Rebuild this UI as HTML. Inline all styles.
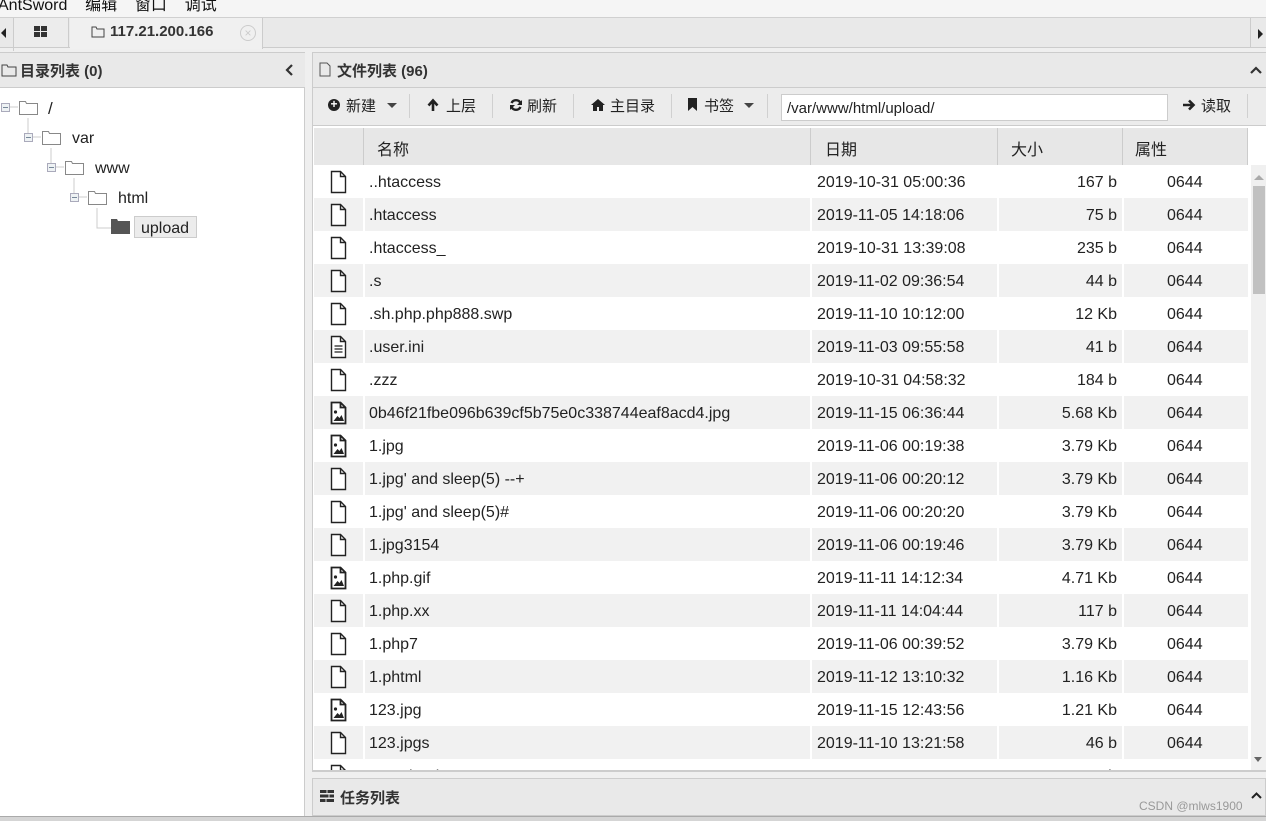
<!DOCTYPE html>
<html><head><meta charset="utf-8"><style>
*{margin:0;padding:0;box-sizing:border-box}
body{width:1266px;height:821px;overflow:hidden;background:#efefef;font-family:"Liberation Sans","Noto Sans CJK SC",sans-serif;font-size:15px;color:#222;position:relative}
.a{position:absolute}
</style></head><body>
<!-- menu -->
<div class="a" style="left:0;top:0;width:1266px;height:17px;background:#f5f5f5"></div>
<div class="a" style="left:-2px;top:-9px;font-size:16px;color:#111">AntSword&nbsp;&nbsp;&nbsp;&nbsp;编辑&nbsp;&nbsp;&nbsp;&nbsp;窗口&nbsp;&nbsp;&nbsp;&nbsp;调试</div>
<!-- tabs -->
<div class="a" style="left:0;top:17px;width:1266px;height:31px;background:#e9e9e9;border-top:1px solid #d0d0d0;border-bottom:1px solid #ccc"></div>
<div class="a" style="left:1px;top:28px;width:0;height:0;border-top:5px solid transparent;border-bottom:5px solid transparent;border-right:5px solid #222"></div>
<div class="a" style="left:13px;top:18px;width:1px;height:33px;background:#ccc"></div>
<div class="a" style="left:14px;top:18px;width:55px;height:29px;background:#ececec;border-right:1px solid #ccc"></div>
<div class="a" style="left:34px;top:26px;width:6px;height:5px;background:#333"></div><div class="a" style="left:41px;top:26px;width:6px;height:5px;background:#333"></div>
<div class="a" style="left:34px;top:32px;width:6px;height:5px;background:#333"></div><div class="a" style="left:41px;top:32px;width:6px;height:5px;background:#333"></div>
<div class="a" style="left:70px;top:18px;width:193px;height:31px;background:#f0f0f0;border-right:1px solid #ccc"></div>
<svg class="a" style="left:91px;top:25px" width="14" height="13"><path d="M1 2h4l1 2h7v8H1z" fill="none" stroke="#444"/></svg>
<div class="a" style="left:110px;top:23px;font-weight:bold;font-size:15px;color:#333">117.21.200.166</div>
<div class="a" style="left:240px;top:25px;width:16px;height:16px;border-radius:50%;border:1px solid #ccc;color:#ccc;font-size:12px;line-height:14px;text-align:center">×</div>
<div class="a" style="left:1250px;top:18px;width:1px;height:30px;background:#ccc"></div>
<div class="a" style="left:1258px;top:29px;width:0;height:0;border-top:5px solid transparent;border-bottom:5px solid transparent;border-left:5px solid #222"></div>
<!-- left panel -->
<div class="a" style="left:0;top:52px;width:305px;height:764px;background:#fff;border-right:1px solid #ccc"></div>
<div class="a" style="left:0;top:52px;width:305px;height:36px;background:#e9e9e9;border-top:1px solid #ccc;border-bottom:1px solid #ccc"></div>
<svg class="a" style="left:1px;top:63px" width="16" height="14"><path d="M1 2h5l1 2h8v9H1z" fill="none" stroke="#444"/></svg>
<div class="a" style="left:20px;top:60px;font-weight:bold;font-size:15px;color:#333">目录列表 (0)</div>
<svg class="a" style="left:285px;top:64px" width="10" height="12"><path d="M7 1L2 6l5 5" fill="none" stroke="#333" stroke-width="2.2"/></svg>
<!-- tree -->
<svg class="a" style="left:0;top:90px" width="210" height="150">
<g stroke="#ccc" fill="none">
<path d="M28 28v20M51 58v20M74 88v20M97 118v20h14"/>
<path d="M10 17h8M33 47h8M56 77h8M79 107h8"/>
</g>
<g fill="#eef2f4" stroke="#aab">
<rect x="1.5" y="13.5" width="8" height="8"/><rect x="24.5" y="43.5" width="8" height="8"/><rect x="47.5" y="73.5" width="8" height="8"/><rect x="70.5" y="103.5" width="8" height="8"/>
</g>
<g stroke="#789"><path d="M3 17.5h5M26 47.5h5M49 77.5h5M72 107.5h5"/></g>
<g fill="#fff" stroke="#888">
<path d="M19.5 11.5h6l1 2h11v11h-18z"/><path d="M42.5 41.5h6l1 2h11v11h-18z"/><path d="M65.5 71.5h6l1 2h11v11h-18z"/><path d="M88.5 101.5h6l1 2h11v11h-18z"/>
</g>
<path d="M111 129h6l1 2h12v13h-19z" fill="#555"/>
</svg>
<div class="a" style="left:48px;top:99px;font-size:17px">/</div>
<div class="a" style="left:72px;top:130px;font-size:16px">var</div>
<div class="a" style="left:95px;top:160px;font-size:16px">www</div>
<div class="a" style="left:118px;top:190px;font-size:16px">html</div>
<div class="a" style="left:134px;top:216px;width:63px;height:22px;background:#ececec;border:1px solid #ccc;font-size:16px;padding:3px 0 0 6px">upload</div>
<!-- right panel -->
<div class="a" style="left:312px;top:52px;width:954px;height:720px;background:#fff;border-left:1px solid #ccc;border-top:1px solid #ccc"></div>
<div class="a" style="left:313px;top:53px;width:953px;height:35px;background:#e9e9e9;border-bottom:1px solid #ccc"></div>
<svg class="a" style="left:319px;top:62px" width="12" height="15"><path d="M1 1h7l3 3v10H1z" fill="none" stroke="#555"/></svg>
<div class="a" style="left:337px;top:60px;font-weight:bold;font-size:15px;color:#333">文件列表 (96)</div>
<svg class="a" style="left:1250px;top:66px" width="12" height="8"><path d="M1 7l5-5 5 5" fill="none" stroke="#333" stroke-width="2.2"/></svg>
<!-- toolbar -->
<div class="a" style="left:313px;top:88px;width:953px;height:38px;background:#ececec;border-bottom:1px solid #ccc"></div>
<div class="a" style="left:328px;top:99px;width:12px;height:12px;border-radius:50%;background:#222;color:#fff;font-size:12px;line-height:11px;text-align:center;font-weight:bold">+</div>
<div class="a" style="left:346px;top:95px;font-size:15px">新建</div>
<div class="a" style="left:387px;top:103px;border-left:5px solid transparent;border-right:5px solid transparent;border-top:5px solid #444"></div>
<div class="a" style="left:409px;top:94px;width:1px;height:24px;background:#d0d0d0"></div>
<svg class="a" style="left:427px;top:98px" width="12" height="14"><path d="M6 13V3M1.5 7.5L6 2.5l4.5 5" fill="none" stroke="#222" stroke-width="2.6"/></svg>
<div class="a" style="left:446px;top:95px;font-size:15px">上层</div>
<div class="a" style="left:492px;top:94px;width:1px;height:24px;background:#d0d0d0"></div>
<svg class="a" style="left:509px;top:98px" width="14" height="14"><path d="M11.5 5A5 5 0 0 0 2.5 5M2.5 9A5 5 0 0 0 11.5 9" fill="none" stroke="#222" stroke-width="2.4"/><path d="M13 2v5H8zM1 12V7h5z" fill="#222"/></svg>
<div class="a" style="left:527px;top:95px;font-size:15px">刷新</div>
<div class="a" style="left:573px;top:94px;width:1px;height:24px;background:#d0d0d0"></div>
<svg class="a" style="left:591px;top:99px" width="14" height="12"><path d="M7 0L0 6h2v6h4v-4h2v4h4V6h2z" fill="#222"/></svg>
<div class="a" style="left:610px;top:95px;font-size:15px">主目录</div>
<div class="a" style="left:671px;top:94px;width:1px;height:24px;background:#d0d0d0"></div>
<svg class="a" style="left:688px;top:98px" width="10" height="14"><path d="M0 0h9v13L4.5 9 0 13z" fill="#222"/></svg>
<div class="a" style="left:704px;top:95px;font-size:15px">书签</div>
<div class="a" style="left:744px;top:103px;border-left:5px solid transparent;border-right:5px solid transparent;border-top:5px solid #444"></div>
<div class="a" style="left:767px;top:94px;width:1px;height:24px;background:#d0d0d0"></div>
<div class="a" style="left:781px;top:94px;width:387px;height:27px;background:#fff;border:1px solid #ccc;font-size:15px;padding:5px 0 0 5px">/var/www/html/upload/</div>
<svg class="a" style="left:1182px;top:99px" width="14" height="12"><path d="M1 6h10M7 1.5L11.5 6 7 10.5" fill="none" stroke="#222" stroke-width="2.6"/></svg>
<div class="a" style="left:1201px;top:95px;font-size:15px">读取</div>
<div class="a" style="left:1247px;top:94px;width:1px;height:24px;background:#d0d0d0"></div>
<!-- table header -->
<div class="a" style="left:314px;top:128px;width:934px;height:37px;background:#e7e7e7"></div>
<div class="a" style="left:363px;top:128px;width:1px;height:37px;background:#ccc"></div>
<div class="a" style="left:810px;top:128px;width:1px;height:37px;background:#ccc"></div>
<div class="a" style="left:997px;top:128px;width:1px;height:37px;background:#ccc"></div>
<div class="a" style="left:1122px;top:128px;width:1px;height:37px;background:#ccc"></div>
<div class="a" style="left:1247px;top:128px;width:1px;height:37px;background:#ccc"></div>
<div class="a" style="left:377px;top:136px;font-size:16px">名称</div>
<div class="a" style="left:825px;top:136px;font-size:16px">日期</div>
<div class="a" style="left:1011px;top:136px;font-size:16px">大小</div>
<div class="a" style="left:1135px;top:136px;font-size:16px">属性</div>
<!-- rows -->
<div class="a" style="left:314px;top:165px;width:934px;height:605px;overflow:hidden">
<div id="rows"></div>
</div>
<svg width="0" height="0" style="position:absolute"><defs>
<symbol id="f" viewBox="0 0 22 24"><path d="M4.5 1.5h9l5 5v16h-14z M13.5 1.5v5h5" fill="#fff" stroke="#222" stroke-width="1.4"/></symbol>
<symbol id="i" viewBox="0 0 22 24"><path d="M4.5 1.5h9l5 5v16h-14z M13.5 1.5v5h5" fill="#fff" stroke="#222" stroke-width="1.8"/><circle cx="8.5" cy="11" r="1.6" fill="#222"/><path d="M6.5 20l4-5 2 2 2-3 2.5 6z" fill="#222"/></symbol>
<symbol id="t" viewBox="0 0 22 24"><path d="M4.5 1.5h9l5 5v16h-14z M13.5 1.5v5h5" fill="#fff" stroke="#222" stroke-width="1.4"/><path d="M7.5 11h8M7.5 14h8M7.5 17h8" stroke="#222" stroke-width="1.2"/></symbol>
</defs></svg>
<script>
var d=[["f","..htaccess","2019-10-31 05:00:36","167 b"],["f",".htaccess","2019-11-05 14:18:06","75 b"],["f",".htaccess_","2019-10-31 13:39:08","235 b"],["f",".s","2019-11-02 09:36:54","44 b"],["f",".sh.php.php888.swp","2019-11-10 10:12:00","12 Kb"],["t",".user.ini","2019-11-03 09:55:58","41 b"],["f",".zzz","2019-10-31 04:58:32","184 b"],["i","0b46f21fbe096b639cf5b75e0c338744eaf8acd4.jpg","2019-11-15 06:36:44","5.68 Kb"],["i","1.jpg","2019-11-06 00:19:38","3.79 Kb"],["f","1.jpg' and sleep(5) --+","2019-11-06 00:20:12","3.79 Kb"],["f","1.jpg' and sleep(5)#","2019-11-06 00:20:20","3.79 Kb"],["f","1.jpg3154","2019-11-06 00:19:46","3.79 Kb"],["i","1.php.gif","2019-11-11 14:12:34","4.71 Kb"],["f","1.php.xx","2019-11-11 14:04:44","117 b"],["f","1.php7","2019-11-06 00:39:52","3.79 Kb"],["f","1.phtml","2019-11-12 13:10:32","1.16 Kb"],["i","123.jpg","2019-11-15 12:43:56","1.21 Kb"],["f","123.jpgs","2019-11-10 13:21:58","46 b"],["f","123.phtml","2019-11-11 05:00:34","53 b"]];
var h="";d.forEach(function(r,k){var g=k%2?"background:#f1f1f1;":"";
h+='<div style="position:absolute;left:0;top:'+(k*33)+'px;width:934px;height:33px;'+g+'">'+
(k%2?'<div style="position:absolute;left:49px;top:0;width:2px;height:33px;background:#fff"></div><div style="position:absolute;left:496px;top:0;width:2px;height:33px;background:#fff"></div><div style="position:absolute;left:683px;top:0;width:2px;height:33px;background:#fff"></div><div style="position:absolute;left:808px;top:0;width:2px;height:33px;background:#fff"></div>':'')+
'<svg style="position:absolute;left:13px;top:5px" width="22" height="24"><use href="#'+r[0]+'"/></svg>'+
'<span style="position:absolute;left:55px;top:9px;font-size:16px;white-space:nowrap">'+r[1]+'</span>'+
'<span style="position:absolute;left:503px;top:9px;font-size:16px">'+r[2]+'</span>'+
'<span style="position:absolute;right:131px;top:9px;font-size:16px">'+r[3]+'</span>'+
'<span style="position:absolute;left:853px;top:9px;font-size:16px">0644</span></div>';});
document.getElementById("rows").innerHTML=h;
</script>
<!-- scrollbar -->
<div class="a" style="left:1251px;top:165px;width:15px;height:605px;background:#f0f0f0"></div>
<div class="a" style="left:1254px;top:175px;border-left:5px solid transparent;border-right:5px solid transparent;border-bottom:5px solid #aaa"></div>
<div class="a" style="left:1253px;top:186px;width:12px;height:108px;background:#c1c1c1"></div>
<div class="a" style="left:1254px;top:757px;border-left:4px solid transparent;border-right:4px solid transparent;border-top:5px solid #666"></div>
<div class="a" style="left:312px;top:770px;width:954px;height:2px;background:#ccc"></div>
<!-- task panel -->
<div class="a" style="left:312px;top:778px;width:954px;height:38px;background:#e9e9e9;border:1px solid #ccc"></div>
<svg class="a" style="left:320px;top:790px" width="14" height="12"><path d="M0 0h14v3H0zM0 4.5h14v3H0zM0 9h14v3H0z" fill="#333"/><path d="M7 0v3M9 4.5v3M6 9v3" stroke="#ddd"/></svg>
<div class="a" style="left:340px;top:787px;font-weight:bold;font-size:15px;color:#333">任务列表</div>
<svg class="a" style="left:1251px;top:792px" width="11" height="7"><path d="M1 6l4.5-4.5L10 6" fill="none" stroke="#222" stroke-width="2"/></svg>
<div class="a" style="left:1139px;top:799px;font-size:12px;color:#999">CSDN @mlws1900</div>
<div class="a" style="left:0;top:816px;width:1266px;height:5px;background:#d5d5d5;border-top:1px solid #aaa"></div>
</body></html>
